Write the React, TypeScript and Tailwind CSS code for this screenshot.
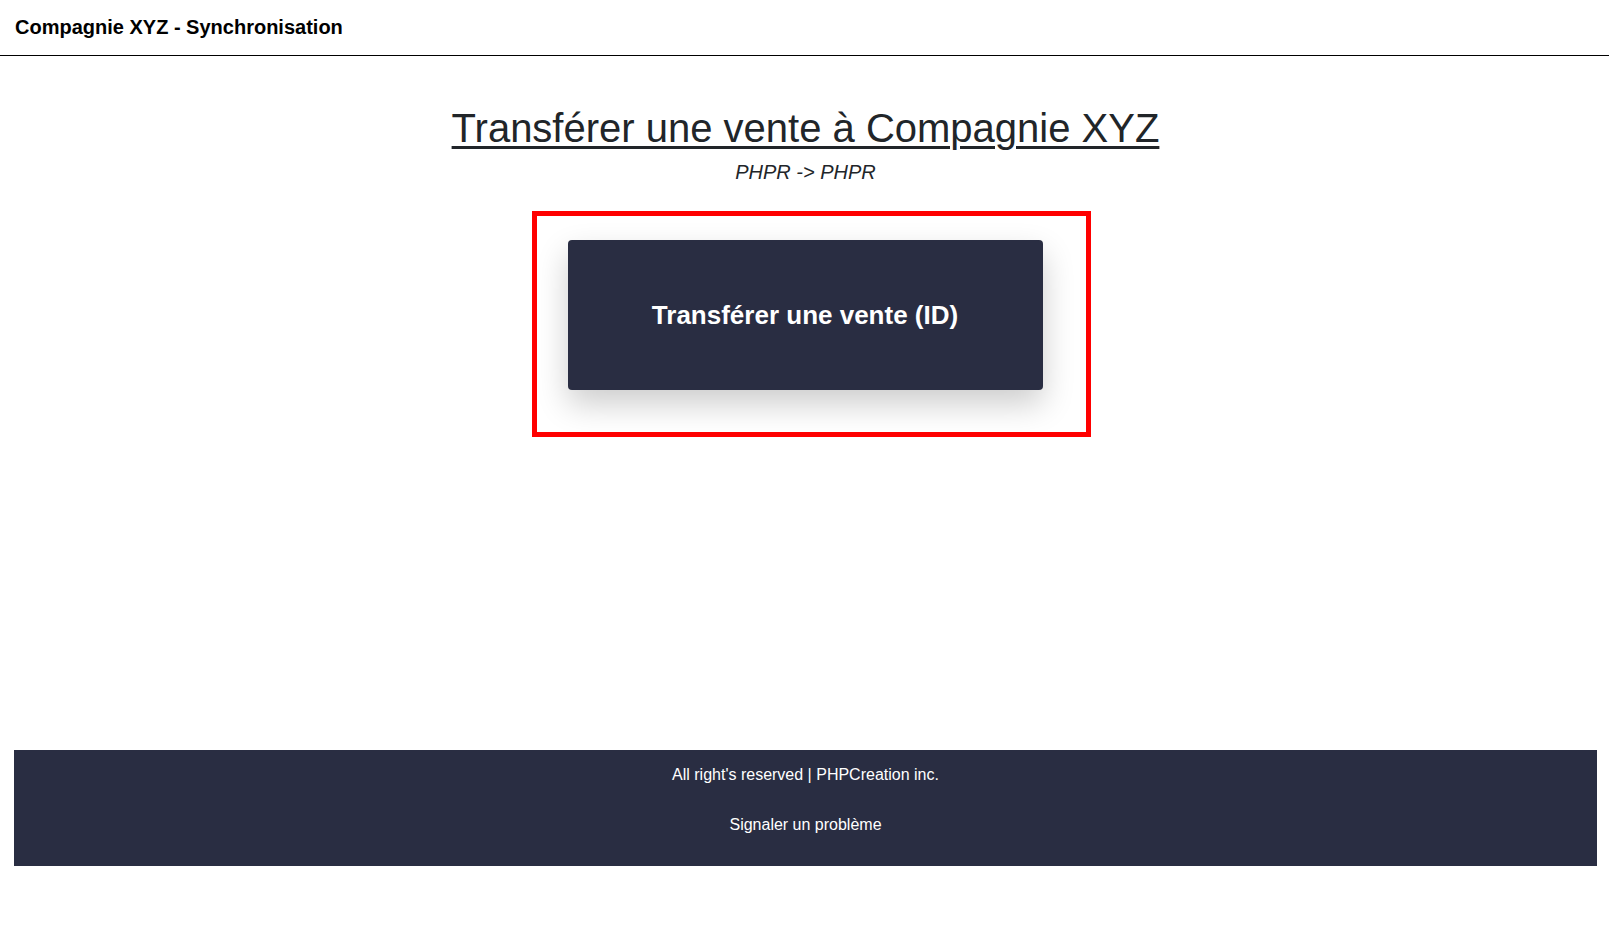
export default function App() {
  return (
    <div className="min-h-screen bg-white font-['Liberation_Sans',Arial,sans-serif] text-[#212529]">
      <header className="flex h-[56px] items-center border-b border-black px-[15px]">
        <span className="text-[20px] font-bold leading-[23px] text-black">Compagnie XYZ - Synchronisation</span>
      </header>

      <main className="flex flex-col items-center">
        <h1 className="mt-[49px] text-[40px] leading-[46px] underline decoration-[2.5px] underline-offset-[4px] translate-x-[1px]">
          Transférer une vente à Compagnie XYZ
        </h1>
        <p className="mt-[10px] text-[20px] italic leading-[23px] translate-x-[1px]">PHPR -&gt; PHPR</p>

        <div className="mt-[27px] ml-[13px] border-[5px] border-[#ff0000] pt-[24px] pr-[43px] pb-[42px] pl-[31px]">
          <button className="flex h-[150px] w-[475px] items-center justify-center rounded-[4px] bg-[#292d42] text-[26px] font-bold text-white shadow-[0_14px_32px_rgba(0,0,0,0.2)]">
            Transférer une vente (ID)
          </button>
        </div>
      </main>

      <footer className="mt-[313px] ml-[14px] mr-[12px] flex flex-col items-center bg-[#292d42] pt-4 pb-8 text-[16px] leading-[18px] text-white">
        <p>All right's reserved | PHPCreation inc.</p>
        <p className="mt-8">Signaler un problème</p>
      </footer>
    </div>
  )
}
